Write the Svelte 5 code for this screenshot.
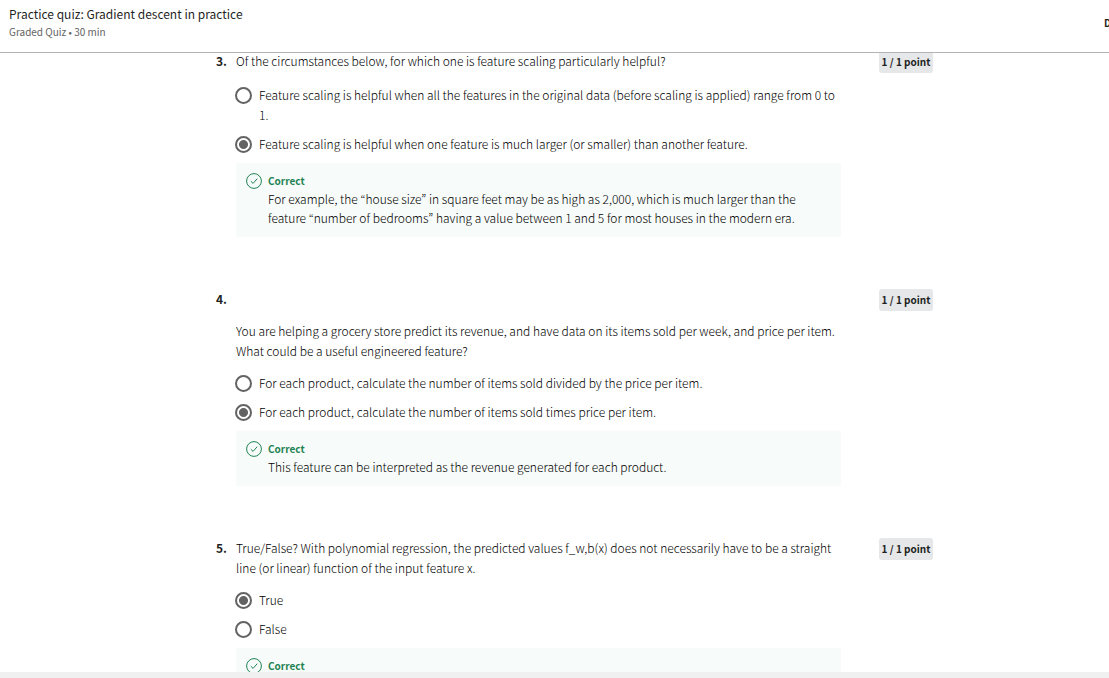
<script>
  const questions = [
    {
      id: 3,
      prompt: 'Of the circumstances below, for which one is feature scaling particularly helpful?',
      options: [
        'Feature scaling is helpful when all the features in the original data (before scaling is applied) range from 0 to 1.',
        'Feature scaling is helpful when one feature is much larger (or smaller) than another feature.'
      ],
      answer: 1,
      feedback:
        'For example, the “house size” in square feet may be as high as 2,000, which is much larger than the feature “number of bedrooms” having a value between 1 and 5 for most houses in the modern era.'
    },
    {
      id: 4,
      passage:
        'You are helping a grocery store predict its revenue, and have data on its items sold per week, and price per item. What could be a useful engineered feature?',
      options: [
        'For each product, calculate the number of items sold divided by the price per item.',
        'For each product, calculate the number of items sold times price per item.'
      ],
      answer: 1,
      feedback: 'This feature can be interpreted as the revenue generated for each product.'
    },
    {
      id: 5,
      prompt:
        'True/False? With polynomial regression, the predicted values f_w,b(x) does not necessarily have to be a straight line (or linear) function of the input feature x.',
      options: ['True', 'False'],
      answer: 0,
      feedback: ''
    }
  ];
</script>

<div class="page">
  <header>
    <div>
      <h1>Practice quiz: Gradient descent in practice</h1>
      <p class="meta">Graded Quiz • 30 min</p>
    </div>
    <span class="due">D</span>
  </header>

  <main>
    <div class="list">
      {#each questions as q (q.id)}
        <section class="question">
          <span class="number">{q.id}.</span>
          <div class="body">
            <fieldset>
              <legend>
                {#if q.prompt}
                  <span class="prompt">{q.prompt}</span>
                {:else}
                  <span class="passage">{q.passage}</span>
                {/if}
              </legend>
              <div class="options">
                {#each q.options as option, i}
                  <label>
                    <input type="radio" name="question-{q.id}" value={i} checked={i === q.answer} />
                    <span>{option}</span>
                  </label>
                {/each}
              </div>
            </fieldset>
            <div class="feedback">
              <svg width="16" height="16" viewBox="0 0 16 16" fill="none" stroke="#1f8354" aria-hidden="true">
                <circle cx="8" cy="8" r="7.4" />
                <path d="M4.8 8.2 7.1 10.4 11.2 5.7" />
              </svg>
              <div>
                <strong>Correct</strong>
                {#if q.feedback}<p>{q.feedback}</p>{/if}
              </div>
            </div>
          </div>
          <span class="points">1 / 1 point</span>
        </section>
      {/each}
    </div>
  </main>
  <footer></footer>
</div>

<style>
  :global(body) {
    margin: 0;
    background: #fff;
  }
  .page {
    display: flex;
    flex-direction: column;
    height: 100vh;
    overflow: hidden;
    font-family: 'Noto Sans CJK KR', 'Open Sans', sans-serif;
    font-size: 12px;
    font-weight: 300;
    line-height: 20px;
    color: #000;
  }
  h1,
  p {
    margin: 0;
  }
  header {
    display: flex;
    flex: none;
    justify-content: space-between;
    overflow: hidden;
    padding: 4px 0 12px 9px;
    border-bottom: 1px solid #b4b4b4;
  }
  h1 {
    font-size: 12px;
    font-weight: 400;
    line-height: 20px;
    color: #1f1f1f;
  }
  .meta {
    font-size: 10px;
    font-weight: 400;
    line-height: 16px;
    color: #636363;
  }
  .due {
    width: 5px;
    padding-top: 9px;
    font-size: 10px;
    font-weight: 700;
    color: #1f1f1f;
  }
  main {
    flex: 1;
    min-height: 0;
    overflow: hidden;
    padding-left: 40px;
  }
  .list {
    display: flex;
    flex-direction: column;
    gap: 52px;
    max-width: 717px;
    margin: -2px auto 0;
  }
  .question {
    display: grid;
    grid-template-columns: 20px 1fr 54px;
    align-items: start;
  }
  .number {
    font-weight: 700;
    color: #1f1f1f;
  }
  .body {
    margin-right: 38px;
  }
  fieldset {
    min-width: 0;
    margin: 0;
    padding: 0;
    border: 0;
  }
  legend {
    padding: 0;
  }
  .prompt {
    display: block;
    min-height: 22px;
  }
  .passage {
    display: block;
    padding-top: 32px;
  }
  .options {
    display: flex;
    flex-direction: column;
    gap: 9px;
    padding: 12px 0 9px;
  }
  label {
    display: flex;
    gap: 7px;
    margin-left: -1px;
  }
  input {
    appearance: none;
    box-sizing: border-box;
    flex: none;
    width: 17px;
    height: 17px;
    margin: 2px 0 0;
    border: 2px solid #636363;
    border-radius: 50%;
    background: #fff;
  }
  input:checked {
    background: radial-gradient(circle, #636363 4px, #fff 5px);
  }
  .feedback {
    display: flex;
    gap: 6px;
    padding: 10px;
    background: #f7fbf9;
  }
  .feedback svg {
    flex: none;
  }
  .feedback strong {
    display: block;
    font-size: 10px;
    font-weight: 700;
    line-height: 16px;
    color: #1f8354;
  }
  .feedback p {
    line-height: 19px;
  }
  .points {
    border-radius: 3px;
    background: #e5e7e8;
    font-size: 10px;
    font-weight: 700;
    line-height: 22px;
    text-align: center;
    white-space: nowrap;
    color: #1f1f1f;
  }
  footer {
    flex: none;
    height: 6px;
    background: #f0f0f0;
  }
</style>
